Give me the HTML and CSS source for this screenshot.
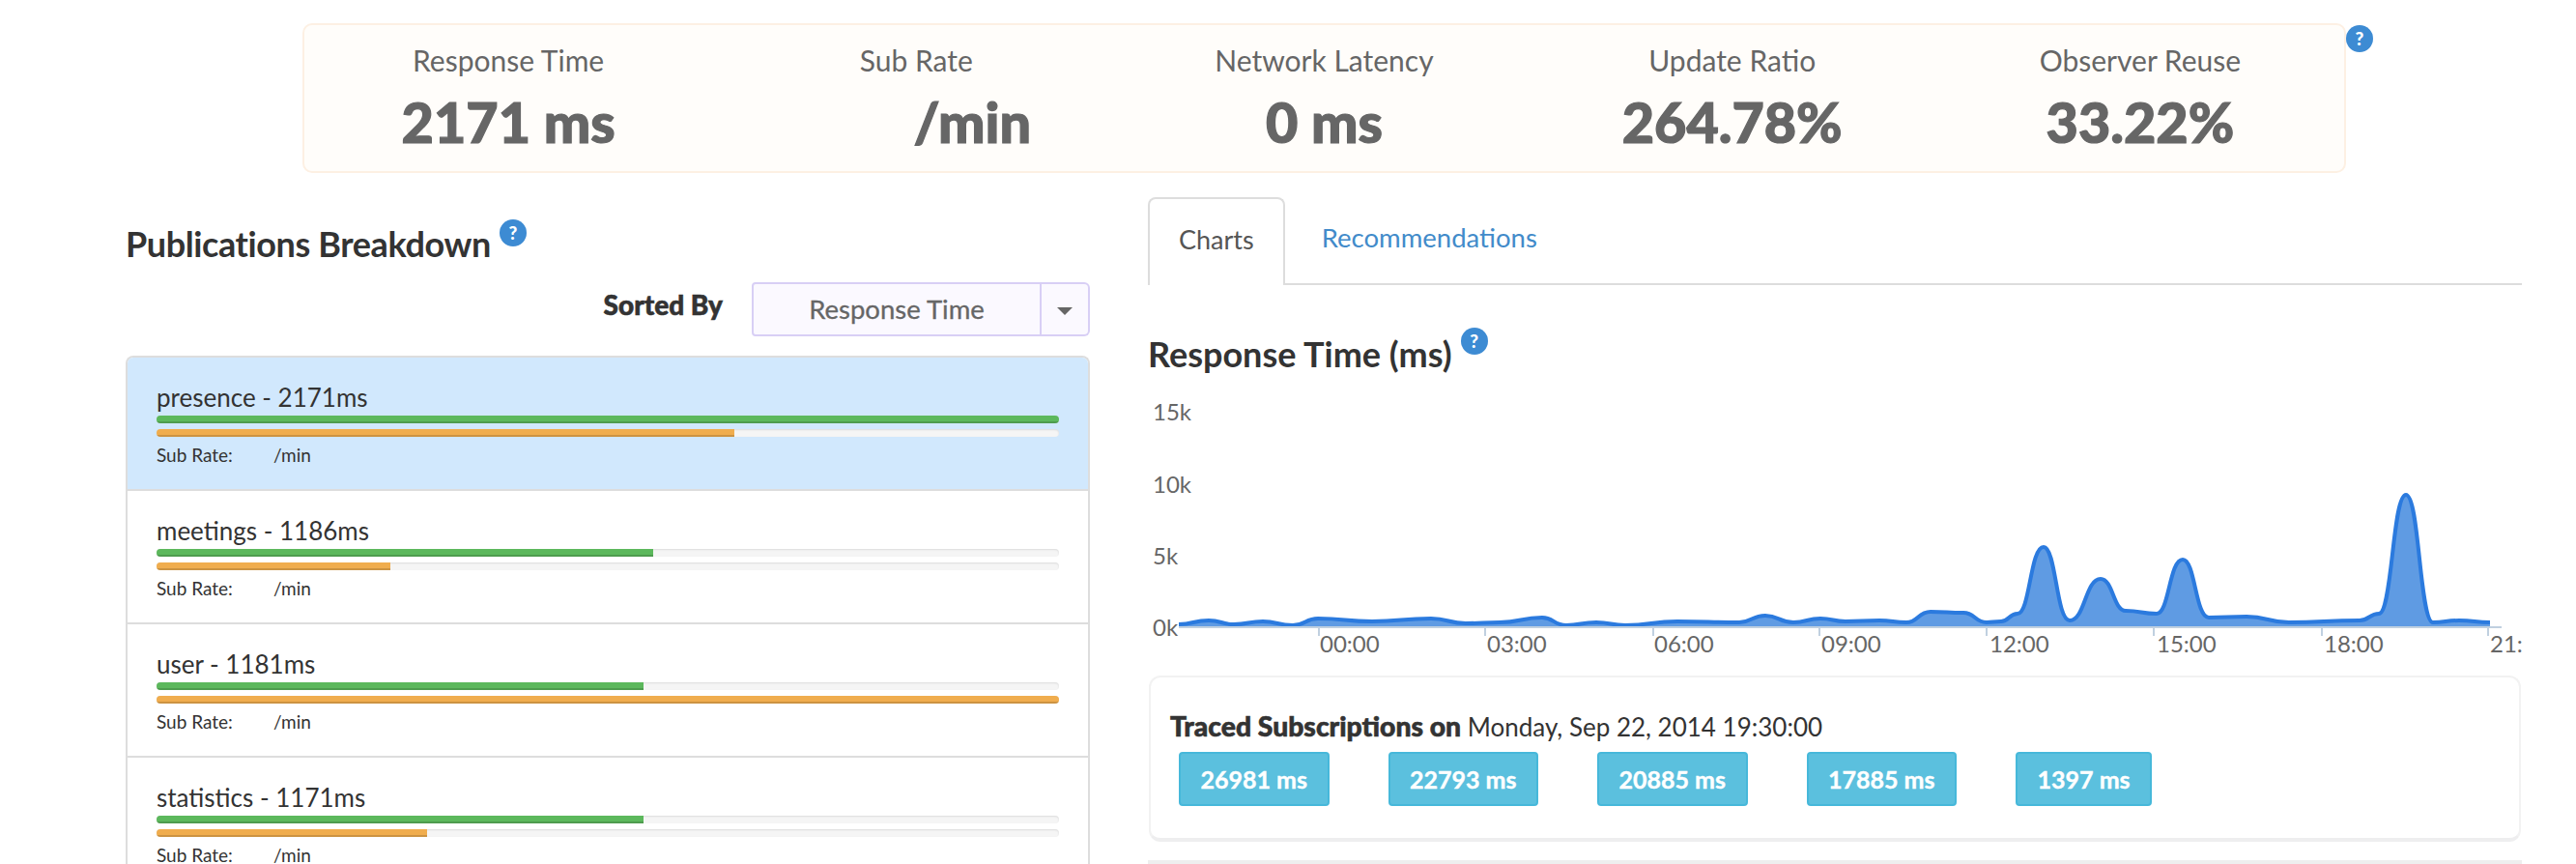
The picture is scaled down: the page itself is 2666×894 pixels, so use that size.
FILE: index.html
```html
<!DOCTYPE html>
<html lang="en">
<head>
<meta charset="utf-8">
<title>Publications Breakdown</title>
<link rel="stylesheet" href="styles.css">
</head>
<body>
<main class="page">
  <section class="stats-wrap">
    <div class="stats">
      <div class="stat"><div class="stat-label">Response Time</div><div class="stat-value">2171 ms</div></div>
      <div class="stat"><div class="stat-label">Sub Rate</div><div class="stat-value stat-value-shift">/min</div></div>
      <div class="stat"><div class="stat-label">Network Latency</div><div class="stat-value">0 ms</div></div>
      <div class="stat"><div class="stat-label">Update Ratio</div><div class="stat-value">264.78%</div></div>
      <div class="stat"><div class="stat-label">Observer Reuse</div><div class="stat-value">33.22%</div></div>
    </div>
    <span class="help help-stats">?</span>
  </section>

  <div class="columns">
    <section class="left">
      <h2 class="heading heading-pubs">Publications Breakdown<span class="help">?</span></h2>
      <div class="sort">
        <span class="sort-label">Sorted By</span>
        <div class="select">
          <span class="select-value">Response Time</span>
          <span class="select-caret"><i class="caret"></i></span>
        </div>
      </div>
      <ul class="list">
        <li class="item item-active">
          <div class="item-title">presence - 2171ms</div>
          <div class="bar"><div class="fill fill-green" style="width:100%"></div></div>
          <div class="bar"><div class="fill fill-orange" style="width:64%"></div></div>
          <div class="item-sub"><span class="sub-label">Sub Rate:</span><span>/min</span></div>
        </li>
        <li class="item">
          <div class="item-title">meetings - 1186ms</div>
          <div class="bar"><div class="fill fill-green" style="width:55%"></div></div>
          <div class="bar"><div class="fill fill-orange" style="width:25.9%"></div></div>
          <div class="item-sub"><span class="sub-label">Sub Rate:</span><span>/min</span></div>
        </li>
        <li class="item">
          <div class="item-title">user - 1181ms</div>
          <div class="bar"><div class="fill fill-green" style="width:54%"></div></div>
          <div class="bar"><div class="fill fill-orange" style="width:100%"></div></div>
          <div class="item-sub"><span class="sub-label">Sub Rate:</span><span>/min</span></div>
        </li>
        <li class="item">
          <div class="item-title">statistics - 1171ms</div>
          <div class="bar"><div class="fill fill-green" style="width:54%"></div></div>
          <div class="bar"><div class="fill fill-orange" style="width:30%"></div></div>
          <div class="item-sub"><span class="sub-label">Sub Rate:</span><span>/min</span></div>
        </li>
      </ul>
    </section>

    <section class="right">
      <nav class="tabs">
        <a class="tab tab-active">Charts</a>
        <a class="tab tab-link">Recommendations</a>
      </nav>
      <h2 class="heading heading-chart">Response Time (ms)<span class="help">?</span></h2>
      <svg class="chart" viewBox="1188 400 1422 290" width="1422" height="290">
        <g class="axis-y">
          <text x="1193" y="435">15k</text>
          <text x="1193" y="510">10k</text>
          <text x="1193" y="584">5k</text>
          <text x="1193" y="658">0k</text>
        </g>
        <path class="area" d="M1220 646C1235 646 1235 642 1251 642C1264 642 1264 646 1277 646C1292 646 1292 643 1307 643C1322 643 1322 647 1338 647C1351 647 1351 640 1364 640C1392 640 1392 643 1420 643C1450 643 1450 640 1481 640C1499 640 1499 645 1517 645C1535 645 1535 644 1552 644C1574 644 1574 639 1596 639C1608 639 1608 647 1621 647C1636 647 1636 644 1652 644C1667 644 1667 647 1682 647C1709 647 1709 643 1736 643C1768 643 1768 644 1800 644C1813 644 1813 637 1827 637C1841 637 1841 644 1856 644C1870 644 1870 640 1884 640C1897 640 1897 643 1910 643C1927 643 1927 642 1945 642C1959 642 1959 644 1973 644C1985 644 1985 633 1998 633C2015 633 2015 634 2032 634C2044 634 2044 644 2056 644C2063 644 2063 643 2071 643C2079 643 2079 635 2088 635C2101 635 2101 566 2115 566C2128 566 2128 642 2142 642C2158 642 2158 599 2174 599C2187 599 2187 632 2200 632C2216 632 2216 635 2232 635C2245 635 2245 579 2259 579C2272 579 2272 639 2286 639C2305 639 2305 638 2325 638C2347 638 2347 644 2369 644C2405 644 2405 642 2442 642C2452 642 2452 635 2462 635C2476 635 2476 512 2490 512C2504 512 2504 644 2518 644C2531 644 2531 642 2545 642C2561 642 2561 644 2577 644L2577 649L1220 649Z"/>
        <path class="line" d="M1220 646C1235 646 1235 642 1251 642C1264 642 1264 646 1277 646C1292 646 1292 643 1307 643C1322 643 1322 647 1338 647C1351 647 1351 640 1364 640C1392 640 1392 643 1420 643C1450 643 1450 640 1481 640C1499 640 1499 645 1517 645C1535 645 1535 644 1552 644C1574 644 1574 639 1596 639C1608 639 1608 647 1621 647C1636 647 1636 644 1652 644C1667 644 1667 647 1682 647C1709 647 1709 643 1736 643C1768 643 1768 644 1800 644C1813 644 1813 637 1827 637C1841 637 1841 644 1856 644C1870 644 1870 640 1884 640C1897 640 1897 643 1910 643C1927 643 1927 642 1945 642C1959 642 1959 644 1973 644C1985 644 1985 633 1998 633C2015 633 2015 634 2032 634C2044 634 2044 644 2056 644C2063 644 2063 643 2071 643C2079 643 2079 635 2088 635C2101 635 2101 566 2115 566C2128 566 2128 642 2142 642C2158 642 2158 599 2174 599C2187 599 2187 632 2200 632C2216 632 2216 635 2232 635C2245 635 2245 579 2259 579C2272 579 2272 639 2286 639C2305 639 2305 638 2325 638C2347 638 2347 644 2369 644C2405 644 2405 642 2442 642C2452 642 2452 635 2462 635C2476 635 2476 512 2490 512C2504 512 2504 644 2518 644C2531 644 2531 642 2545 642C2561 642 2561 644 2577 644"/>
        <path class="axis" d="M1220 649H2589M1365 649V658M1537 649V658M1711 649V658M1883 649V658M2056 649V658M2229 649V658M2403 649V658M2575 649V658"/>
        <g class="axis-x">
          <text x="1366" y="675">00:00</text>
          <text x="1539" y="675">03:00</text>
          <text x="1712" y="675">06:00</text>
          <text x="1885" y="675">09:00</text>
          <text x="2059" y="675">12:00</text>
          <text x="2232" y="675">15:00</text>
          <text x="2405" y="675">18:00</text>
          <text x="2577" y="675">21:00</text>
        </g>
      </svg>
      <div class="traced">
        <p class="traced-title"><strong>Traced Subscriptions on</strong> Monday, Sep 22, 2014 19:30:00</p>
        <div class="traced-buttons">
          <a class="trace-btn">26981 ms</a>
          <a class="trace-btn">22793 ms</a>
          <a class="trace-btn">20885 ms</a>
          <a class="trace-btn">17885 ms</a>
          <a class="trace-btn">1397 ms</a>
        </div>
      </div>
      <div class="rule"></div>
    </section>
  </div>
</main>
</body>
</html>
```
FILE: styles.css
```css
html, body {
  margin: 0;
  padding: 0;
  height: 894px;
  overflow: hidden;
  background: #fff;
}
body {
  font-family: "Lato", "Liberation Sans", sans-serif;
  color: #333;
}
.page {
  width: 2666px;
  box-sizing: border-box;
  padding: 24px 0 0 130px;
}

/* top stats */
.stats-wrap {
  position: relative;
  margin-left: 183px;
  width: 2115px;
}
.stats {
  display: grid;
  grid-template-columns: repeat(5, 1fr);
  box-sizing: border-box;
  height: 155px;
  background: #fffdfa;
  border: 2px solid #fdf0e3;
  border-radius: 10px;
}
.stat {
  text-align: center;
  color: #666;
}
.stat-label {
  font-size: 30px;
  line-height: 36px;
  margin-top: 18px;
}
.stat-value {
  font-size: 57.5px;
  font-weight: 900;
  line-height: 64px;
  margin-top: 14px;
  -webkit-text-stroke: 1.2px #666;
}
.stat-value-shift {
  padding-left: 116px;
}
.help {
  display: inline-block;
  width: 28px;
  height: 28px;
  border-radius: 50%;
  background: #3d8bd3;
  color: #fff;
  font-size: 19px;
  font-weight: 900;
  line-height: 28px;
  text-align: center;
}
.help-stats {
  position: absolute;
  left: 2115px;
  top: 2px;
}

/* columns */
.columns {
  display: grid;
  grid-template-columns: 998px 1422px;
  column-gap: 60px;
}
.heading {
  margin: 0;
  font-size: 36px;
  font-weight: 700;
  line-height: 44px;
  color: #333;
  display: flex;
  align-items: flex-start;
}
.heading .help {
  margin-left: 9px;
}
.heading-pubs {
  margin-top: 51px;
  letter-spacing: -0.4px;
}
.heading-pubs .help {
  margin-top: -3px;
  letter-spacing: 0;
}
.heading-chart .help {
  margin-top: -5px;
}

/* sort select */
.sort {
  display: flex;
  justify-content: flex-end;
  margin-top: 18px;
}
.sort-label {
  font-size: 28px;
  font-weight: 900;
  line-height: 36px;
  margin: 0 30px 0 0;
  padding-top: 5px;
  -webkit-text-stroke: 0.6px #333;
}
.select {
  display: flex;
  height: 56px;
  color: #666;
  font-size: 27.5px;
}
.select-value {
  box-sizing: border-box;
  width: 300px;
  border: 2px solid #d8cff5;
  background: #fbf9ff;
  border-radius: 4px 0 0 4px;
  text-align: center;
  line-height: 52px;
  -webkit-text-stroke: 0.3px #666;
}
.select-caret {
  box-sizing: border-box;
  width: 50px;
  border: 2px solid #d8cff5;
  border-left: 0;
  background: #fbf9ff;
  border-radius: 0 6px 6px 0;
  display: flex;
  align-items: center;
  justify-content: center;
}
.caret {
  width: 0;
  height: 0;
  border-left: 8px solid transparent;
  border-right: 8px solid transparent;
  border-top: 8px solid #666;
  margin-top: 4px;
}

/* list */
.list {
  list-style: none;
  margin: 20px 0 0;
  padding: 0;
  border: 2px solid #ddd;
  border-bottom: 0;
  border-radius: 8px 8px 0 0;
}
.item {
  box-sizing: border-box;
  height: 138px;
  padding: 24px 30px 0;
  border-bottom: 2px solid #ddd;
  background: #fff;
}
.item-active {
  background: #d1e8fd;
  border-radius: 6px 6px 0 0;
}
.item-title {
  font-size: 26px;
  line-height: 34px;
  height: 36px;
  color: #333;
}
.bar {
  height: 8px;
  margin-bottom: 6px;
  background: #f5f5f5;
  border-radius: 4px;
  overflow: hidden;
  box-shadow: inset 0 1px 2px rgba(0, 0, 0, 0.1);
}
.fill {
  height: 8px;
  box-shadow: inset 0 -2px 0 rgba(0, 0, 0, 0.15);
}
.fill-green { background: #5cb85c; }
.fill-orange { background: #f0ad4e; }
.item-sub {
  display: flex;
  font-size: 19px;
  line-height: 24px;
  margin-top: 7px;
  color: #333;
}
.sub-label {
  width: 121px;
}

/* tabs */
.tabs {
  display: flex;
  height: 91px;
  box-sizing: border-box;
  border-bottom: 2px solid #ddd;
  margin-top: 25px;
  font-size: 27.5px;
}
.tab {
  box-sizing: border-box;
  height: 91px;
  padding: 0 34px;
  line-height: 84px;
}
.tab-active {
  color: #555;
  background: #fff;
  border: 2px solid #ddd;
  border-bottom: 0;
  border-radius: 8px 8px 0 0;
  padding: 0 30px;
  font-size: 27px;
}
.tab-link {
  color: #428bca;
  margin-left: 4px;
}
.heading-chart {
  margin-top: 49px;
}

/* chart */
.chart {
  display: block;
  margin-top: 12px;
}
.chart text {
  font-size: 24px;
  fill: #666;
}
.area { fill: #5f9be3; }
.line {
  fill: none;
  stroke: #2b7ade;
  stroke-width: 4;
}
.axis {
  fill: none;
  stroke: #c0d0e0;
  stroke-width: 2;
}

/* traced panel */
.traced {
  box-sizing: border-box;
  height: 172px;
  margin-top: 9px;
  width: 1420px;
  margin-left: 1px;
  padding: 33px 20px 0;
  border: 2px solid #f2f2f2;
  border-bottom: 4px solid #eeeeef;
  border-radius: 12px;
}
.traced-title {
  margin: 0;
  font-size: 26px;
  line-height: 34px;
  color: #333;
}
.traced-title strong {
  font-size: 28.3px;
  font-weight: 900;
  -webkit-text-stroke: 0.6px #333;
}
.traced-buttons {
  display: flex;
  gap: 61px;
  margin-top: 9px;
  margin-left: 9px;
}
.trace-btn {
  box-sizing: border-box;
  min-width: 141px;
  height: 56px;
  padding: 0 20.5px;
  background: #5bc0de;
  border: 2px solid #46b8da;
  border-radius: 4px;
  color: #fff;
  font-size: 25px;
  font-weight: 700;
  line-height: 52px;
  text-align: center;
  white-space: nowrap;
  -webkit-text-stroke: 0.4px #fff;
}
.rule {
  height: 4px;
  margin-top: 19px;
  background: #eee;
}
```
